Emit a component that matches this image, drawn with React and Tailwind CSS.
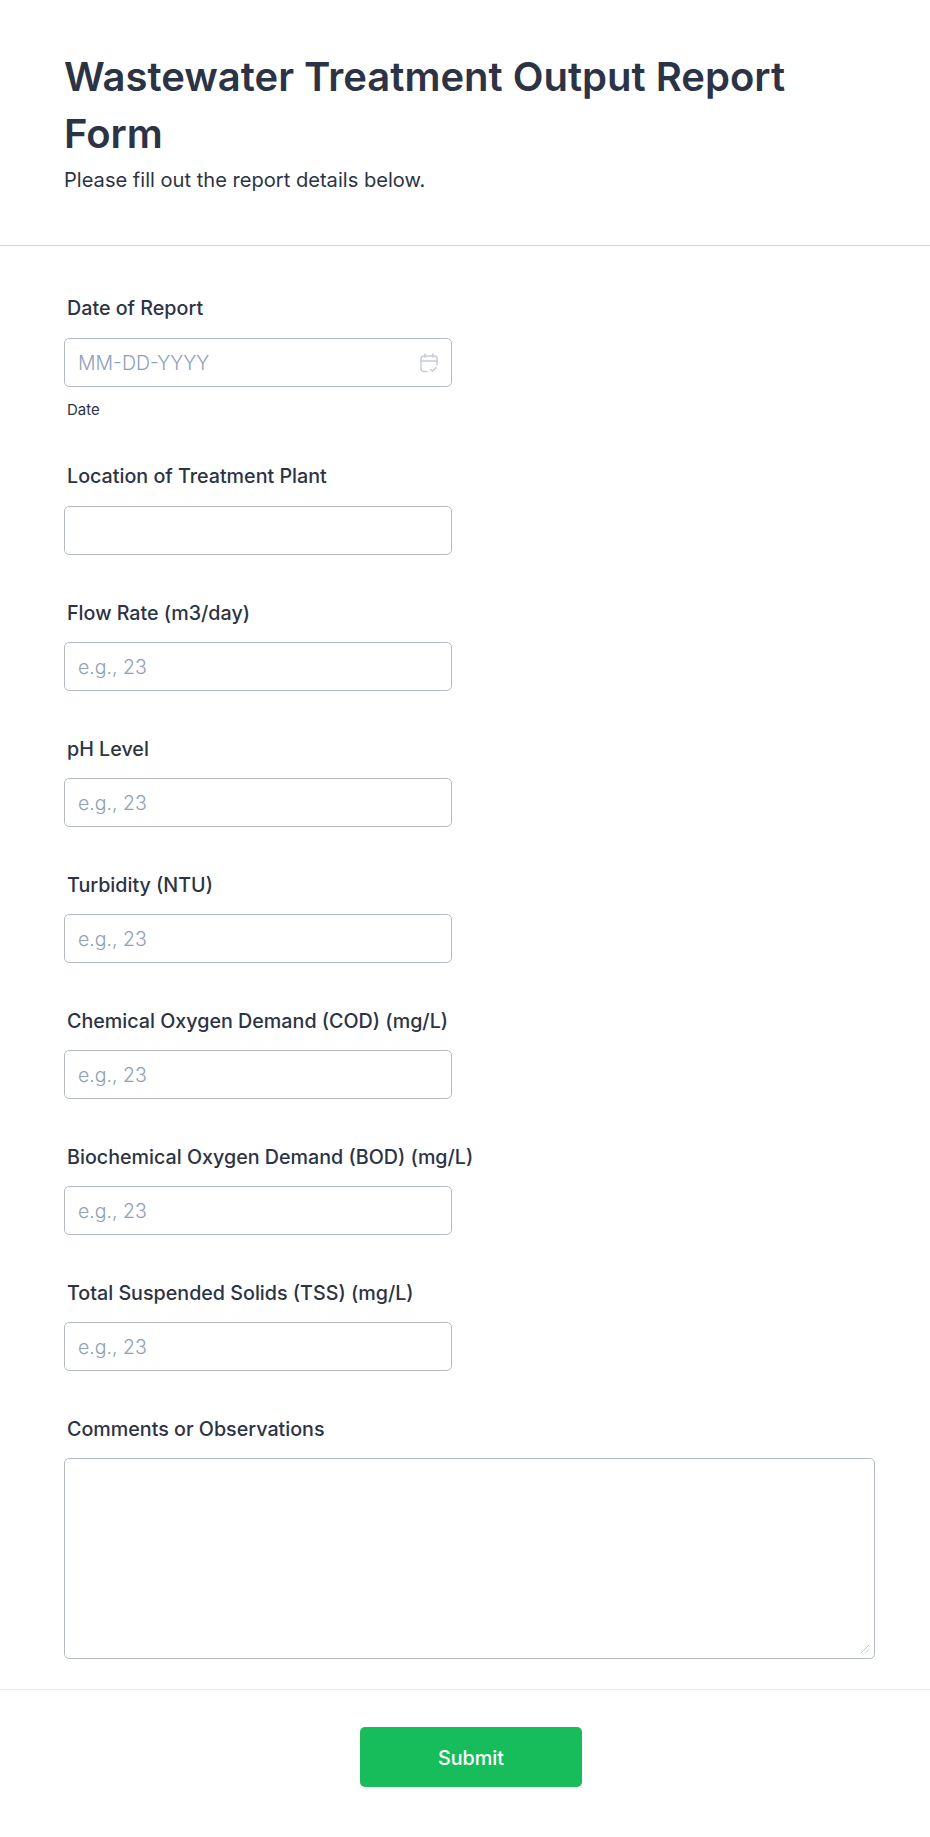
import React from 'react';

const numberFields = [
  'Flow Rate (m3/day)',
  'pH Level',
  'Turbidity (NTU)',
  'Chemical Oxygen Demand (COD) (mg/L)',
  'Biochemical Oxygen Demand (BOD) (mg/L)',
  'Total Suspended Solids (TSS) (mg/L)',
];

const inputClass =
  'block w-[388px] h-[49px] px-[13px] border border-[#b4b9c9] rounded-[5px] bg-white text-[19.5px] font-light text-[#2c3345] placeholder:text-[#8ea0b8] outline-none';

const labelClass = 'block h-[28px] mb-[16px] ml-[3px] text-[19.7px] leading-[28px] font-medium text-[#2c3345]';
const lowerLabelClass = 'block h-[28px] mb-[15px] ml-[3px] text-[19.7px] leading-[28px] font-medium text-[#2c3345]';

const CalendarIcon = () => (
  <svg
    width="18"
    height="20"
    viewBox="0 0 18 20"
    fill="none"
    stroke="#c8ccd6"
    strokeWidth="1.5"
    strokeLinecap="round"
    strokeLinejoin="round"
    className="absolute right-[14px] top-[15px]"
  >
    <path d="M7 18.5H3.5a2.5 2.5 0 0 1-2.5-2.5V5.5A2.5 2.5 0 0 1 3.5 3h11A2.5 2.5 0 0 1 17 5.5V12" />
    <path d="M1 8h16" />
    <path d="M5 1v3M13 1v3" />
    <path d="M10.5 16.5l1.8 1.8 3.7-3.7" />
  </svg>
);

const ResizeHandle = () => (
  <svg
    width="10"
    height="10"
    viewBox="0 0 10 10"
    fill="none"
    stroke="#c4c8d4"
    strokeWidth="1"
    className="absolute right-[5px] bottom-[5px] pointer-events-none"
  >
    <path d="M9 1L1 9" />
    <path d="M9.5 5L5 9.5" />
  </svg>
);

const App = () => {
  return (
    <div className="min-h-[1837px] bg-white font-['Inter',sans-serif] text-[#2c3345]">
      {/* Header */}
      <div className="h-[246px] px-16 pt-[48px] border-b border-[#d3d6de]">
        <h1 className="text-[40px] leading-[57px] font-semibold">
          Wastewater Treatment Output Report Form
        </h1>
        <p className="mt-[4px] text-[20.1px] leading-[28px]">Please fill out the report details below.</p>
      </div>

      <form className="px-16 pt-[48px]">
        {/* Date */}
        <div className="pb-[12px]">
          <label className={labelClass}>Date of Report</label>
          <div className="relative w-[388px]">
            <input className={inputClass} placeholder="MM-DD-YYYY" />
            <CalendarIcon />
          </div>
          <div className="mt-[13px] ml-[3px] text-[15px] leading-[20px]">Date</div>
        </div>

        <div className="pt-[30px] pb-[20px]">
          <label className={labelClass}>Location of Treatment Plant</label>
          <input className={inputClass} />
        </div>

        {numberFields.map((name) => (
          <div key={name} className="pt-[24px] pb-[20px]">
            <label className={lowerLabelClass}>{name}</label>
            <input className={inputClass} placeholder="e.g., 23" />
          </div>
        ))}

        <div className="pt-[24px]">
          <label className={lowerLabelClass}>Comments or Observations</label>
          <div className="relative w-[811px]">
            <textarea className="block w-full h-[201px] px-3 py-2 border border-[#b4b9c9] rounded-[5px] bg-white outline-none resize-none" />
            <ResizeHandle />
          </div>
        </div>
      </form>

      {/* Footer */}
      <div className="mt-[30px] pt-[37px] pl-3 border-t border-[#e9ebf0] flex justify-center">
        <button
          type="button"
          className="w-[222px] h-[60px] pt-[3px] rounded-[5px] bg-[#18bd5b] text-white text-[19.8px] font-medium"
        >
          Submit
        </button>
      </div>
    </div>
  );
};

export default App;
